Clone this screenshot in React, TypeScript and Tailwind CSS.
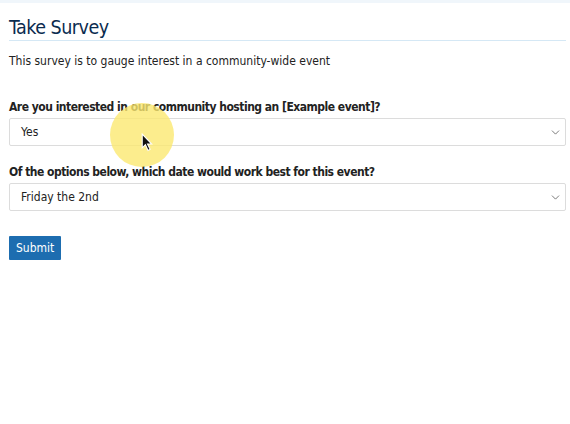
import { ChevronDown } from "lucide-react";

function Field({ label, value, className }: { label: string; value: string; className: string }) {
  return (
    <div className={className}>
      <label className="block text-[12px] font-bold text-[#222] leading-[16px] tracking-[-0.5px]">{label}</label>
      <div className="relative mt-[3px] h-[28px] border border-[#dcdcdc] rounded-[2px] bg-white flex items-center pl-[11px] pr-2">
        <span className="text-[12px] text-[#222]">{value}</span>
        <ChevronDown className="absolute right-[3px] top-[7px] w-[13px] h-[13px] text-[#444]" strokeWidth={1.3} />
      </div>
    </div>
  );
}

export default function App() {
  return (
    <div className="w-[570px] h-[424px] bg-white relative overflow-hidden" style={{ fontFamily: '"DejaVu Sans Condensed", "DejaVu Sans", sans-serif' }}>
      <div className="h-[3px] bg-[#f0f6fb]" />
      <div className="pl-[9px] pr-[4px]">
        <h1 className="mt-[13px] text-[19.5px] tracking-[-0.5px] text-[#0b2c4f] leading-[24px] border-b border-[#d5e8f5]">Take Survey</h1>
        <p className="mt-[12px] text-[12px] text-[#222] leading-[16px]">This survey is to gauge interest in a community-wide event</p>
        <Field className="mt-[30px]" label="Are you interested in our community hosting an [Example event]?" value="Yes" />
        <Field className="mt-[18px]" label="Of the options below, which date would work best for this event?" value="Friday the 2nd" />
        <button className="mt-[25px] h-[24px] px-[7px] bg-[#1d6db0] text-white text-[12px] rounded-[1px]">Submit</button>
      </div>
      <div className="absolute left-[110px] top-[103px] w-[64px] h-[64px] rounded-full bg-[#fbe870]/80" />
      <svg className="absolute left-[141px] top-[133px]" width="13" height="19" viewBox="0 0 12 18">
        <path d="M1 1 L1 14 L4 11 L6.5 16.5 L8.5 15.5 L6 10.5 L10 10.5 Z" fill="#111" stroke="#fff" strokeWidth="1" />
      </svg>
    </div>
  );
}
